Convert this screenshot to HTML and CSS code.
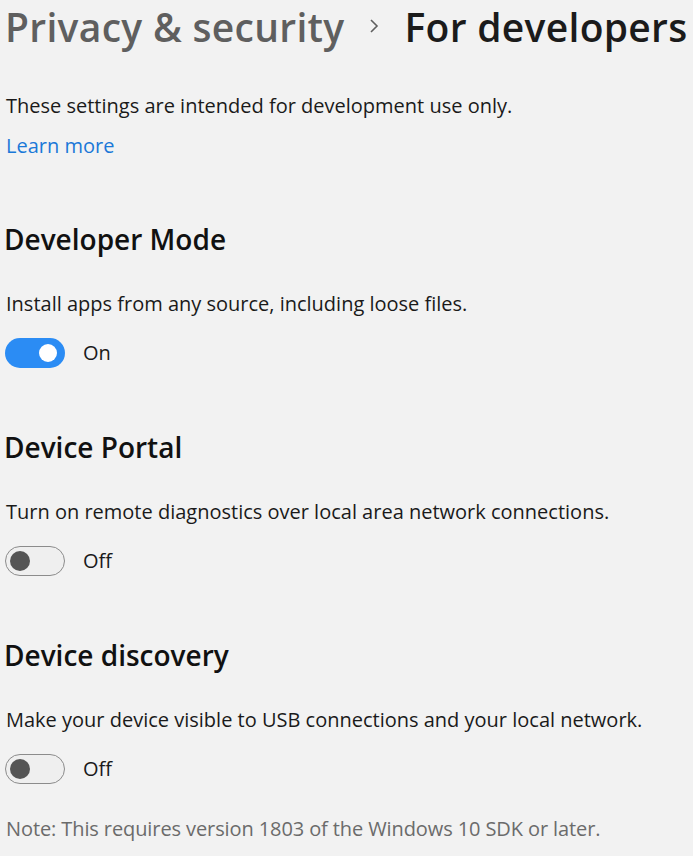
FILE: index.html
```html
<!DOCTYPE html>
<html lang="en">
<head>
<meta charset="utf-8">
<title>For developers</title>
<link rel="stylesheet" href="styles.css">
</head>
<body>
<main class="page">
  <h1 class="crumbs">
    <span class="crumb-parent">Privacy &amp; security</span>
    <svg class="chev" width="12" height="16" viewBox="0 0 12 16" aria-hidden="true"><path d="M3 2 L9 8 L3 14" fill="none" stroke="#5f5f5f" stroke-width="1.6"/></svg>
    <span class="crumb-current">For developers</span>
  </h1>
  <p class="intro">These settings are intended for development use only.</p>
  <a class="learn" href="#">Learn more</a>

  <section class="setting">
    <h2 class="setting-title">Developer Mode</h2>
    <p class="setting-desc">Install apps from any source, including loose files.</p>
    <div class="toggle-row">
      <span class="switch on"><span class="knob"></span></span>
      <span class="toggle-label">On</span>
    </div>
  </section>

  <section class="setting">
    <h2 class="setting-title">Device Portal</h2>
    <p class="setting-desc">Turn on remote diagnostics over local area network connections.</p>
    <div class="toggle-row">
      <span class="switch off"><span class="knob"></span></span>
      <span class="toggle-label">Off</span>
    </div>
  </section>

  <section class="setting">
    <h2 class="setting-title">Device discovery</h2>
    <p class="setting-desc">Make your device visible to USB connections and your local network.</p>
    <div class="toggle-row">
      <span class="switch off"><span class="knob"></span></span>
      <span class="toggle-label">Off</span>
    </div>
  </section>

  <p class="note">Note: This requires version 1803 of the Windows 10 SDK or later.</p>
</main>
</body>
</html>
```
FILE: styles.css
```css
html, body {
  margin: 0;
  padding: 0;
  background: #f2f2f2;
}
body {
  font-family: "Open Sans", "Noto Sans", sans-serif;
  color: #1a1a1a;
}
.page {
  padding: 0 0 0 5px;
  display: flex;
  flex-direction: column;
  align-items: flex-start;
}
.crumbs {
  margin: 0;
  height: 52px;
  display: flex;
  align-items: center;
  font-size: 39px;
  font-weight: 600;
  line-height: 53px;
  letter-spacing: 0.3px;
  white-space: nowrap;
}
.crumb-parent {
  color: #5f5f5f;
}
.chev {
  margin: 0 24px 0 24px;
}
.crumb-current {
  color: #1b1b1b;
}
.intro {
  margin: 40px 0 0 1px;
  font-size: 20px;
  line-height: 28px;
}
.learn {
  margin: 12px 0 0 1px;
  font-size: 20px;
  line-height: 28px;
  color: #1a78d8;
  text-decoration: none;
}
.setting {
  display: flex;
  flex-direction: column;
  align-items: flex-start;
}
.setting-title {
  margin: 60px 0 0 -1px;
  font-size: 28px;
  font-weight: 600;
  line-height: 38px;
  color: #111;
}
.setting-desc {
  margin: 32px 0 0 1px;
  font-size: 20px;
  line-height: 28px;
}
.toggle-row {
  margin-top: 20px;
  display: flex;
  align-items: center;
  gap: 18px;
}
.switch {
  box-sizing: border-box;
  width: 60px;
  height: 30px;
  border-radius: 15px;
  display: flex;
  align-items: center;
}
.switch.on {
  background: #2b8cf4;
  justify-content: flex-end;
  padding-right: 8px;
}
.switch.on .knob {
  width: 18px;
  height: 18px;
  border-radius: 50%;
  background: #ffffff;
}
.switch.off {
  background: #efefef;
  border: 1.5px solid #8c8c8c;
  padding-left: 4px;
}
.switch.off .knob {
  width: 20px;
  height: 20px;
  border-radius: 50%;
  background: #555555;
}
.toggle-label {
  font-size: 20px;
  line-height: 28px;
  color: #1a1a1a;
}
.note {
  margin: 31px 0 0 1px;
  font-size: 20px;
  line-height: 28px;
  color: #6b6b6b;
  letter-spacing: -0.1px;
}
```
